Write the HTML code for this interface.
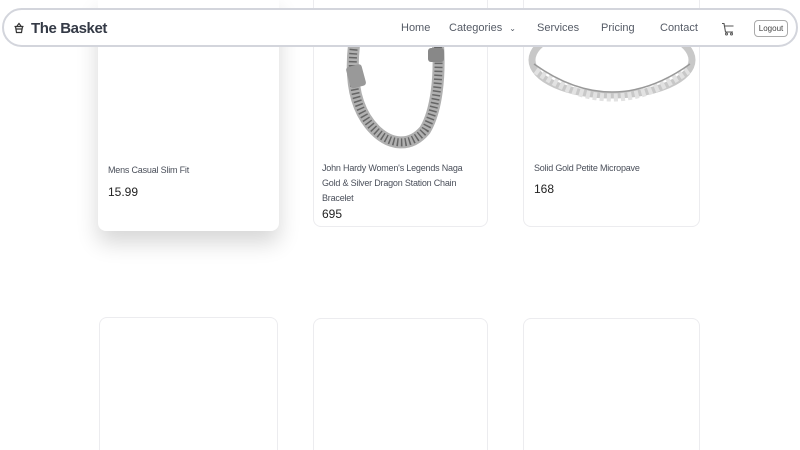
<!DOCTYPE html>
<html><head><meta charset="utf-8"><style>
*{box-sizing:border-box;margin:0;padding:0}
html,body{width:800px;height:450px;overflow:hidden}
body{background:#fff;font-family:"Liberation Sans",sans-serif;position:relative;color:#333}
.card{position:absolute;background:#fff;border:1px solid #ececef;border-radius:8px}
.bot{border-bottom:none;border-radius:8px 8px 0 0}
.t{position:absolute;font-size:9px;color:#4a4f5a;line-height:15px;letter-spacing:-0.2px}
.p{position:absolute;font-size:12px;color:#222}
nav{position:absolute;left:2px;top:8px;width:796px;height:39px;border:2px solid #d3d5dc;border-radius:20px;background:#fff}
nav .a{position:absolute;top:12px;font-size:11px;color:#555b66}
</style></head><body>
<div class="card" style="left:98px;top:0;width:181px;height:231px;border:none;border-radius:0 0 8px 8px;box-shadow:0 12px 22px rgba(0,0,0,0.16)"></div>
<div class="t" style="left:108px;top:163px">Mens Casual Slim Fit</div>
<div class="p" style="left:108px;top:185px">15.99</div>
<div class="card" style="left:313px;top:0;width:175px;height:227px;border-top:none;border-radius:0 0 8px 8px"></div>
<svg style="position:absolute;left:340px;top:40px" width="110" height="115">
<path d="M14 5 C10 40 15 70 35 90 C50 105 70 108 85 90 C97 70 100 35 98 5" fill="none" stroke="#b0b0b0" stroke-width="12"/>
<path d="M14 5 C10 40 15 70 35 90 C50 105 70 108 85 90 C97 70 100 35 98 5" fill="none" stroke="#666" stroke-width="8" stroke-dasharray="1.5 2.5"/>
<rect x="8" y="25" width="16" height="22" rx="3" fill="#999" transform="rotate(-15 17 36)"/>
<rect x="88" y="8" width="16" height="14" rx="3" fill="#888"/>
</svg>
<div class="t" style="left:322px;top:161px;width:150px">John Hardy Women's Legends Naga Gold &amp; Silver Dragon Station Chain Bracelet</div>
<div class="p" style="left:322px;top:207px">695</div>
<div class="card" style="left:523px;top:0;width:177px;height:227px;border-top:none;border-radius:0 0 8px 8px"></div>
<svg style="position:absolute;left:526px;top:30px" width="172" height="75">
<ellipse cx="86" cy="30" rx="80" ry="35" fill="none" stroke="#c8c8c8" stroke-width="7"/>
<path d="M10 40 Q86 95 162 40" fill="none" stroke="#e2e2e2" stroke-width="8" stroke-dasharray="4 3"/>
<path d="M8 34 Q86 90 164 34" fill="none" stroke="#999" stroke-width="1.5"/>
</svg>
<div class="t" style="left:534px;top:161px">Solid Gold Petite Micropave</div>
<div class="p" style="left:534px;top:182px">168</div>
<div class="card bot" style="left:99px;top:317px;width:179px;height:133px"></div>
<div class="card bot" style="left:313px;top:318px;width:175px;height:132px"></div>
<div class="card bot" style="left:523px;top:318px;width:177px;height:132px"></div>
<nav>
<svg style="position:absolute;left:9px;top:12px" width="12" height="12" viewBox="0 0 12 12"><path d="M4 4 L6 1.5 L8 4 M1.5 4.5 H10.5 M2.5 4.5 L3.5 10.5 H8.5 L9.5 4.5 M3 7 H9" fill="none" stroke="#333" stroke-width="1.2"/></svg>
<div style="position:absolute;left:27px;top:10px;font-size:15px;font-weight:bold;color:#343a46;letter-spacing:-0.4px">The Basket</div>
<div class="a" style="left:397px">Home</div>
<div class="a" style="left:445px">Categories <span style="font-size:8px;margin-left:4px">&#8964;</span></div>
<div class="a" style="left:533px">Services</div>
<div class="a" style="left:597px">Pricing</div>
<div class="a" style="left:656px">Contact</div>
<svg style="position:absolute;left:717px;top:12px" width="14" height="14" viewBox="0 0 14 14"><path d="M1 1.5 H3 L4.5 10 H12 M3.5 4 H12.5" fill="none" stroke="#555" stroke-width="1.1"/><circle cx="5.5" cy="12" r="1" fill="none" stroke="#555"/><circle cx="10.5" cy="12" r="1" fill="none" stroke="#555"/></svg>
<div style="position:absolute;left:750px;top:10px;width:34px;height:17px;border:1px solid #aaa;border-radius:4px;font-size:8px;color:#444;text-align:center;line-height:15px">Logout</div>
</nav>
</body></html>
